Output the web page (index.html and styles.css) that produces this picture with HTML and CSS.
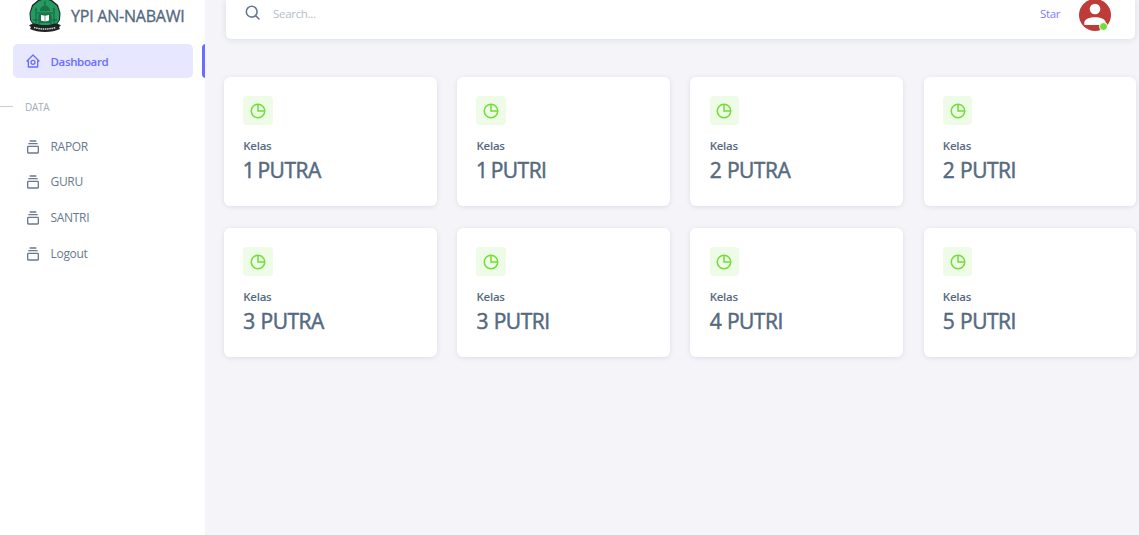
FILE: index.html
```
<!DOCTYPE html>
<html lang="id">
<head>
<meta charset="utf-8">
<title>YPI AN-NABAWI</title>
<link rel="stylesheet" href="styles.css">
</head>
<body>
<svg class="defs" width="0" height="0">
  <symbol id="stack" viewBox="0 0 24 24"><path d="M19 10H5c-1.100 0-2 .9-2 2v8c0 1.100.9 2 2 2h14c1.100 0 2-.9 2-2v-8c0-1.100-.9-2-2-2zM5 20v-8h14v8zM5 6h14v2H5zM7 2h10v2H7z"/></symbol>
  <symbol id="pie" viewBox="0 0 24 24"><path fill="none" stroke="currentColor" stroke-width="2" d="M12 3a9 9 0 1 0 9 9 9 9 0 0 0-9-9zM12 3v9h9"/></symbol>
</svg>
<div class="app">
  <aside class="sidebar">
    <div class="brand">
      <svg class="logo" viewBox="0 0 32 35">
        <path fill="#202724" d="M16 0 23 2 29 7 31.500 15 31 22 27 28H5L1 22 .5 15 3 7 9 2z"/>
        <path fill="#239b61" d="M16 1 22 3 28 8 30.500 15 30 22 26 28H6L2 22 1.500 15 4 8 10 3z"/>
        <path fill="none" stroke="#17603e" stroke-width="1" d="M16 3v5M7 25V12M25 25V12M10 26v-9h12v9M8 15h16M4 22h5M23 22h5"/>
        <path fill="#1b7249" d="M11 13c0-7 10-7 10 0zM5.500 12 7 9l1.500 3zM23.500 12 25 9l1.500 3zM10 16h12v9H10z"/>
        <path fill="#fff" d="M12 17l4 .8 4-.8v5.500l-4 1-4-1z"/>
        <path stroke="#46705b" stroke-width=".7" d="M16 17.500v6"/>
        <path fill="#1e2221" d="M0 27.500c4-2.500 6-2.500 10-1q6 1 12 0c4-1.500 6-1.500 10 1l-2 1.500 1 2c-8 4-22 4-30 0l1-2z"/>
        <path fill="none" stroke="#d5d8d6" stroke-width="1.500" stroke-dasharray="1.500 .7" d="M5 29.500q11 3 22 0"/>
      </svg>
      <span class="brand-name">YPI AN-NABAWI</span>
    </div>
    <a class="item active">
      <svg class="icon" viewBox="0 0 24 24"><path fill="none" stroke="currentColor" stroke-width="2" stroke-linejoin="round" d="M3 12l9-9 9 9h-2v9H5v-9z"/><circle cx="12" cy="14" r="3" fill="none" stroke="currentColor" stroke-width="2"/></svg>
      <span>Dashboard</span>
    </a>
    <div class="section"><span>DATA</span></div>
    <nav class="menu">
      <a class="item"><svg class="icon"><use href="#stack"/></svg><span>RAPOR</span></a>
      <a class="item"><svg class="icon"><use href="#stack"/></svg><span>GURU</span></a>
      <a class="item"><svg class="icon"><use href="#stack"/></svg><span>SANTRI</span></a>
      <a class="item"><svg class="icon"><use href="#stack"/></svg><span>Logout</span></a>
    </nav>
  </aside>
  <main class="main">
    <header class="navbar">
      <svg class="search-icon" viewBox="0 0 16 16"><circle cx="6.700" cy="6.700" r="5.400"/><path d="M10.600 10.600 14 14"/></svg>
      <span class="placeholder">Search...</span>
      <a class="star">Star</a>
      <div class="avatar">
        <svg viewBox="0 0 32 32"><circle cx="16" cy="16" r="16" fill="#bd3c3a"/><circle cx="16" cy="10" r="5.300" fill="#fff"/><path fill="#fff" d="M5.300 26v-2.500C6 16.500 26 16.500 26.700 23.500V26z"/></svg>
        <i class="online"></i>
      </div>
    </header>
    <section class="cards">
      <article class="card"><div class="tile"><svg><use href="#pie"/></svg></div><span class="label">Kelas</span><h3 class="one">1 PUTRA</h3></article>
      <article class="card"><div class="tile"><svg><use href="#pie"/></svg></div><span class="label">Kelas</span><h3 class="one">1 PUTRI</h3></article>
      <article class="card"><div class="tile"><svg><use href="#pie"/></svg></div><span class="label">Kelas</span><h3>2 PUTRA</h3></article>
      <article class="card"><div class="tile"><svg><use href="#pie"/></svg></div><span class="label">Kelas</span><h3>2 PUTRI</h3></article>
      <article class="card"><div class="tile"><svg><use href="#pie"/></svg></div><span class="label">Kelas</span><h3>3 PUTRA</h3></article>
      <article class="card"><div class="tile"><svg><use href="#pie"/></svg></div><span class="label">Kelas</span><h3>3 PUTRI</h3></article>
      <article class="card"><div class="tile"><svg><use href="#pie"/></svg></div><span class="label">Kelas</span><h3>4 PUTRI</h3></article>
      <article class="card"><div class="tile"><svg><use href="#pie"/></svg></div><span class="label">Kelas</span><h3>5 PUTRI</h3></article>
    </section>
  </main>
</div>
</body>
</html>
```
FILE: styles.css
```
* { box-sizing: border-box; }
body { margin: 0; background: #f4f4f9; color: #697a8d; font-family: "Open Sans", "Noto Sans", sans-serif; font-size: 12px; overflow: hidden; }
.defs { display: block; }
.app { display: flex; height: 535px; }
.sidebar { width: 205.4px; flex: none; background: #fff; overflow: hidden; }
.brand { display: flex; align-items: flex-start; height: 44px; padding-left: 29px; }
.logo { width: 32px; height: 35px; margin-top: -2px; flex: none; }
.brand-name { margin-left: 10px; font-size: 16px; line-height: 22px; margin-top: 5px; letter-spacing: -.22px; -webkit-text-stroke: .35px #566a7f; color: #566a7f; white-space: nowrap; }
.item { display: flex; align-items: center; height: 35.6px; padding-left: 25px; }
.item span { margin-left: 9.5px; line-height: 18px; letter-spacing: -.3px; }
.icon { width: 16px; height: 16px; fill: currentColor; flex: none; }
.active { height: 34px; margin: 0 12.4px 0 13px; padding-left: 12px; border-radius: 5px; background: #e7e7ff; color: #696cff; position: relative; }
.active span { padding-top: 1px; font-size: 11.5px; font-weight: 600; letter-spacing: -.35px; }
.active::after { content: ""; position: absolute; left: 189px; top: 0; width: 4px; height: 34px; border-radius: 4px 0 0 4px; background: #696cff; }
.section { display: flex; align-items: center; height: 51px; padding-top: 7px; font-size: 10px; letter-spacing: -.3px; color: #a1acb8; }
.section::before { content: ""; width: 13px; height: 1px; margin: -1px 12px 0 0; background: #c9cfd6; }
.main { flex: 1; padding-left: 18.6px; }
.navbar { display: flex; align-items: flex-start; width: 909px; height: 39px; margin-left: 2px; background: #fff; border-radius: 0 0 5px 5px; box-shadow: 0 1px 6px rgba(67, 89, 113, .14); }
.search-icon { width: 16px; height: 16px; margin: 5px 0 0 19px; fill: none; stroke: #697a8d; stroke-width: 1.6; stroke-linecap: round; }
.placeholder { margin: 5px 0 0 12px; line-height: 18px; font-size: 11.5px; letter-spacing: -.3px; color: #b4bdc6; }
.star { margin: 5px 0 0 auto; line-height: 18px; font-size: 11.5px; letter-spacing: -.4px; color: #7b7dff; }
.avatar { position: relative; width: 32px; height: 32px; margin: -1px 24px 0 19px; }
.avatar svg { display: block; width: 32px; height: 32px; }
.online { position: absolute; right: 3px; bottom: 0; width: 9px; height: 9px; border: 1px solid #fff; border-radius: 50%; background: #71dd37; }
.cards { display: grid; grid-template-columns: repeat(4, 212.6px); gap: 21.9px 20.6px; padding-top: 38px; }
.card { height: 129px; padding: 19px 19.3px; background: #fff; border-radius: 6px; box-shadow: 0 1px 5px rgba(67, 89, 113, .13); }
.tile { display: flex; align-items: center; justify-content: center; width: 29.6px; height: 29.3px; border-radius: 4px; background: #edfbe7; color: #71dd37; }
.tile svg { width: 18px; height: 18px; }
.label { display: block; margin-top: 11.5px; line-height: 18px; font-size: 11.5px; font-weight: 600; letter-spacing: -.25px; color: #566a7f; }
.card h3 { margin: 0; font-size: 21px; line-height: 30px; font-weight: 400; letter-spacing: -.5px; word-spacing: .8px; -webkit-text-stroke: .5px #566a7f; color: #566a7f; white-space: nowrap; }
.card .one { word-spacing: -1.8px; text-indent: -.5px; }
```
